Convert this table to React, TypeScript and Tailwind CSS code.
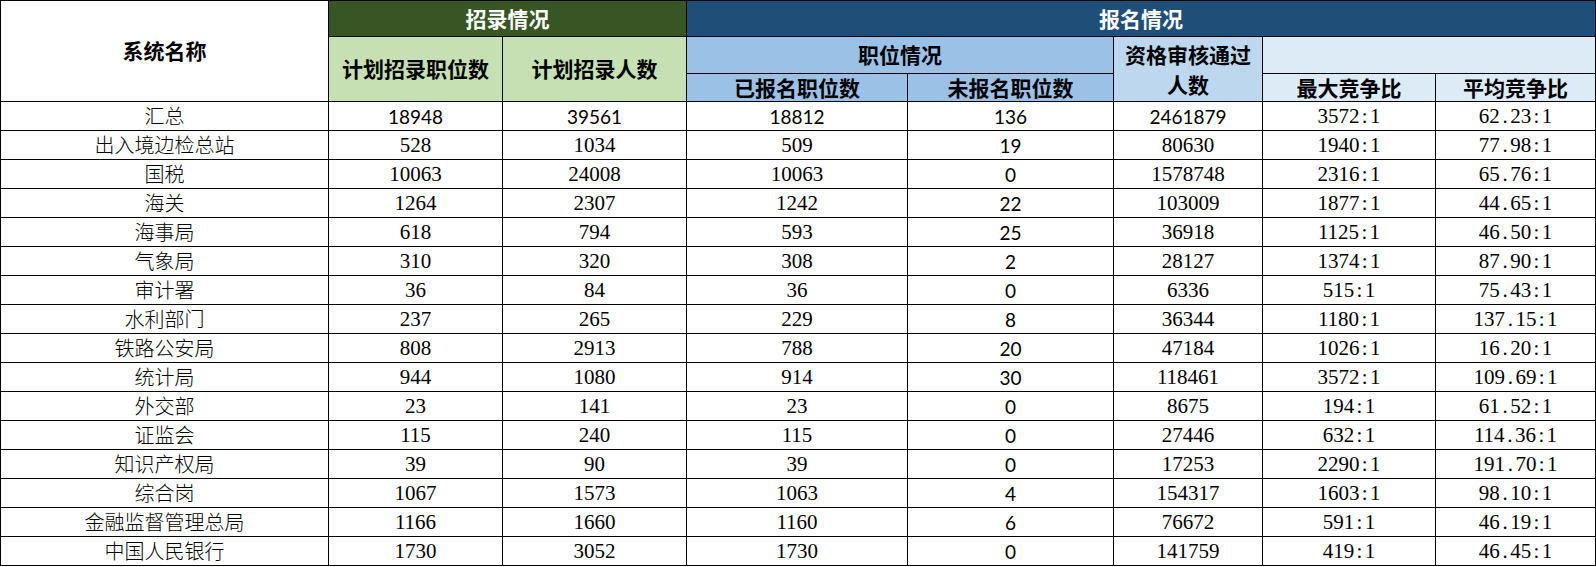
import type { ReactNode } from 'react';

type Row = [string, number, number, number, number, number, string, string];

const summary: Row = ['汇总', 18948, 39561, 18812, 136, 2461879, '3572:1', '62.23:1'];

const rows: Row[] = [
  ['出入境边检总站', 528, 1034, 509, 19, 80630, '1940:1', '77.98:1'],
  ['国税', 10063, 24008, 10063, 0, 1578748, '2316:1', '65.76:1'],
  ['海关', 1264, 2307, 1242, 22, 103009, '1877:1', '44.65:1'],
  ['海事局', 618, 794, 593, 25, 36918, '1125:1', '46.50:1'],
  ['气象局', 310, 320, 308, 2, 28127, '1374:1', '87.90:1'],
  ['审计署', 36, 84, 36, 0, 6336, '515:1', '75.43:1'],
  ['水利部门', 237, 265, 229, 8, 36344, '1180:1', '137.15:1'],
  ['铁路公安局', 808, 2913, 788, 20, 47184, '1026:1', '16.20:1'],
  ['统计局', 944, 1080, 914, 30, 118461, '3572:1', '109.69:1'],
  ['外交部', 23, 141, 23, 0, 8675, '194:1', '61.52:1'],
  ['证监会', 115, 240, 115, 0, 27446, '632:1', '114.36:1'],
  ['知识产权局', 39, 90, 39, 0, 17253, '2290:1', '191.70:1'],
  ['综合岗', 1067, 1573, 1063, 4, 154317, '1603:1', '98.10:1'],
  ['金融监督管理总局', 1166, 1660, 1160, 6, 76672, '591:1', '46.19:1'],
  ['中国人民银行', 1730, 3052, 1730, 0, 141759, '419:1', '46.45:1'],
];

// SimSun-style half-width punctuation: every char takes the same width
const Ratio = ({ value }: { value: string }) => (
  <>
    {value.split('').map((ch, i) =>
      ch === '.' || ch === ':' ? (
        <span key={i} className="inline-block w-[0.5em] text-center">
          {ch}
        </span>
      ) : (
        <span key={i}>{ch}</span>
      ),
    )}
  </>
);

const serif = "font-['Liberation_Serif','Noto_Sans_CJK_SC',serif] text-[21px]";
const sans = "font-['Lato','Liberation_Sans',sans-serif] text-[19px]";
const cjk = "font-['Noto_Sans_CJK_SC',sans-serif] text-[20px] font-light";
const head = "font-['Noto_Sans_CJK_SC',sans-serif] font-bold text-[21px]";

const Td = ({ className, children }: { className: string; children: ReactNode }) => (
  <td className={`border border-black p-0 text-center leading-none text-black ${className}`}>{children}</td>
);

const DataRow = ({ row, total }: { row: Row; total?: boolean }) => {
  const [name, plan, people, applied, empty, passed, max, avg] = row;
  const num = total ? sans : serif;
  return (
    <tr className="h-[29px]">
      <Td className={cjk}>{name}</Td>
      <Td className={num}>{plan}</Td>
      <Td className={num}>{people}</Td>
      <Td className={num}>{applied}</Td>
      <Td className={sans}>{empty}</Td>
      <Td className={num}>{passed}</Td>
      <Td className={serif}>
        <Ratio value={max} />
      </Td>
      <Td className={serif}>
        <Ratio value={avg} />
      </Td>
    </tr>
  );
};

export default function App() {
  return (
    <div className="h-[567px] w-[1596px] overflow-hidden bg-white">
      <table className="w-[1595px] table-fixed border-collapse">
        <colgroup>
          <col className="w-[328px]" />
          <col className="w-[174px]" />
          <col className="w-[184px]" />
          <col className="w-[221px]" />
          <col className="w-[206px]" />
          <col className="w-[149px]" />
          <col className="w-[173px]" />
          <col className="w-[160px]" />
        </colgroup>
        <thead>
          <tr className="h-[36px]">
            <th rowSpan={3} className={`border border-black bg-white p-0 text-black ${head}`}>
              系统名称
            </th>
            <th colSpan={2} className={`border border-black bg-[#375623] p-0 text-white ${head} text-[20px]`}>
              招录情况
            </th>
            <th colSpan={5} className={`border border-black bg-[#1f4e78] p-0 text-white ${head} text-[20px]`}>
              报名情况
            </th>
          </tr>
          <tr className="h-[37px]">
            <th rowSpan={2} className={`border border-black bg-[#c6e0b4] p-0 text-black ${head}`}>
              计划招录职位数
            </th>
            <th rowSpan={2} className={`border border-black bg-[#c6e0b4] p-0 text-black ${head}`}>
              计划招录人数
            </th>
            <th colSpan={2} className={`border border-black bg-[#9bc2e6] p-0 text-black ${head}`}>
              职位情况
            </th>
            <th rowSpan={2} className={`border border-black bg-[#bdd7ee] p-0 leading-[30px] text-black ${head}`}>
              资格审核通过
              <br />
              人数
            </th>
            <th colSpan={2} className="border border-black bg-[#ddebf7] p-0" />
          </tr>
          <tr className="h-[28px]">
            <th className={`border border-black bg-[#9bc2e6] p-0 leading-none text-black ${head}`}>已报名职位数</th>
            <th className={`border border-black bg-[#9bc2e6] p-0 leading-none text-black ${head}`}>未报名职位数</th>
            <th className={`border border-black bg-[#ddebf7] p-0 leading-none text-black ${head}`}>最大竞争比</th>
            <th className={`border border-black bg-[#ddebf7] p-0 leading-none text-black ${head}`}>平均竞争比</th>
          </tr>
        </thead>
        <tbody>
          <DataRow row={summary} total />
          {rows.map((r) => (
            <DataRow key={r[0]} row={r} />
          ))}
        </tbody>
      </table>
    </div>
  );
}
